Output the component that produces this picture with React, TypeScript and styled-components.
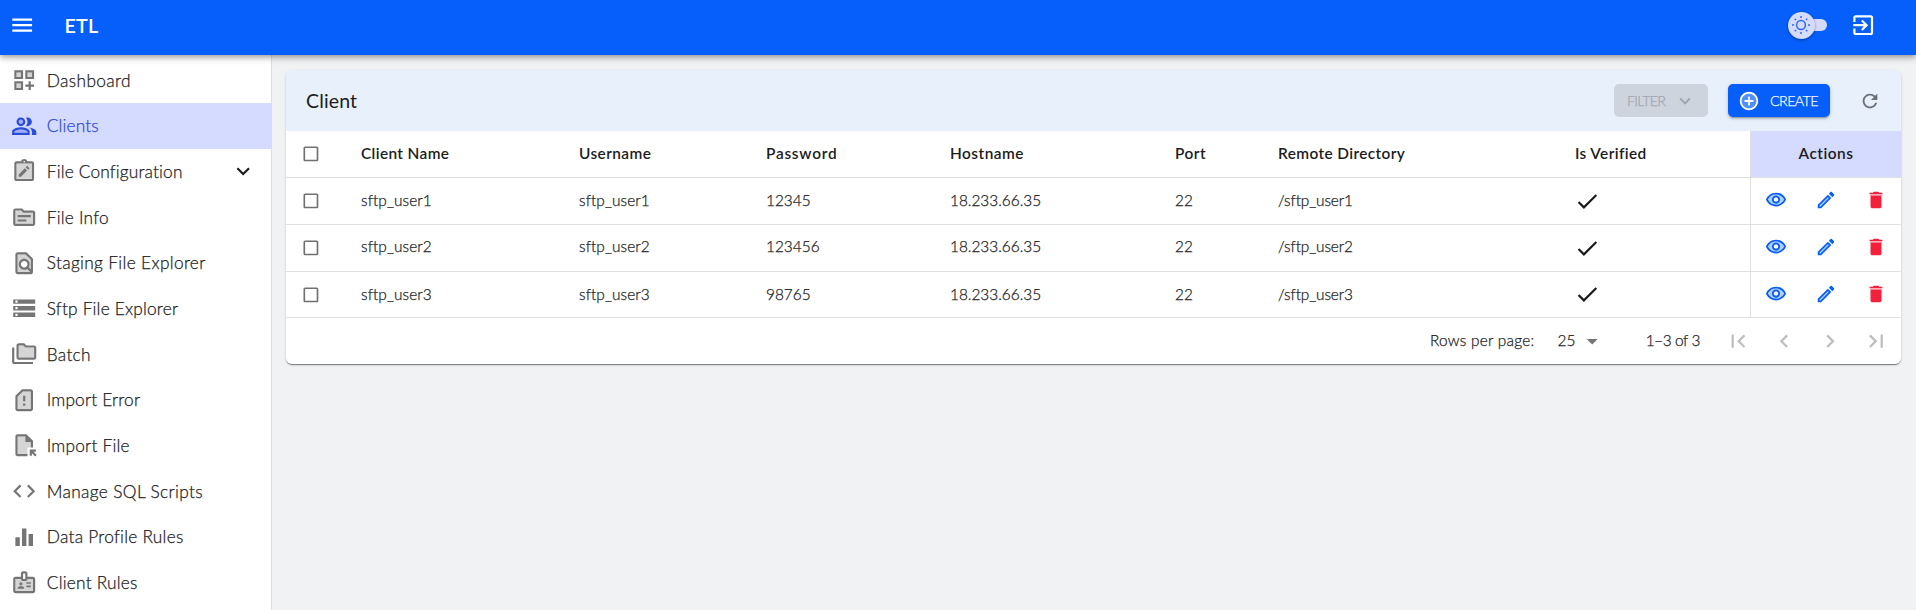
import React from "react";
import styled, { createGlobalStyle } from "styled-components";

const Global = createGlobalStyle`
  * { box-sizing: border-box; }
  body {
    margin: 0;
    background: #f1f2f4;
    color: #1c1c1c;
    font-family: Lato, "Liberation Sans", sans-serif;
  }
  button { font-family: inherit; margin: 0; }
  svg { display: block; flex: none; }
`;

/* ---------- icons ---------- */

type Shape = { d?: string; soft?: string };

const shapes: Record<string, Shape> = {
  menu: { d: "M3 18h18v-2H3zm0-5h18v-2H3zm0-7v2h18V6z" },
  exit: {
    d: "M10.09 15.59 11.5 17l5-5-5-5-1.41 1.41L12.67 11H3v2h9.67zM19 3H5c-1.1 0-2 .9-2 2v4h2V5h14v14H5v-4H3v4c0 1.1.9 2 2 2h14c1.1 0 2-.9 2-2V5c0-1.1-.9-2-2-2",
  },
  dashboard: {
    soft: "M5 5h4v4H5zM15 5h4v4h-4zM5 15h4v4H5z",
    d: "M3 11h8V3H3zm2-6h4v4H5zM13 3v8h8V3zm6 6h-4V5h4zM3 21h8v-8H3zm2-6h4v4H5zM18 13h-2v3h-3v2h3v3h2v-3h3v-2h-3z",
  },
  clients: {
    soft: "M9 6a2 2 0 1 0 0 4 2 2 0 0 0 0-4zM9 15c-2.7 0-5.8 1.29-6 2.01V18h12v-1c-.2-.71-3.3-2-6-2z",
    d: "M16.67 13.13C18.04 14.06 19 15.32 19 17v3h4v-3c0-2.18-3.57-3.47-6.33-3.87zM15 12c2.21 0 4-1.79 4-4s-1.79-4-4-4c-.47 0-.91.1-1.33.24C14.5 5.27 15 6.58 15 8s-.5 2.73-1.33 3.76c.42.14.86.24 1.33.24zM9 12c2.21 0 4-1.79 4-4s-1.79-4-4-4-4 1.79-4 4 1.79 4 4 4zm0-6c1.1 0 2 .9 2 2s-.9 2-2 2-2-.9-2-2 .9-2 2-2zm0 7c-2.67 0-8 1.34-8 4v3h16v-3c0-2.66-5.33-4-8-4zm6 5H3v-.99C3.2 16.29 6.3 15 9 15s5.8 1.29 6 2v1z",
  },
  config: {
    soft: "M5 5h14v14H5z",
    d: "M19 3h-4.18C14.4 1.84 13.3 1 12 1s-2.4.84-2.82 2H5c-1.1 0-2 .9-2 2v14c0 1.1.9 2 2 2h14c1.1 0 2-.9 2-2V5c0-1.1-.9-2-2-2zm-7-.25c.41 0 .75.34.75.75s-.34.75-.75.75-.75-.34-.75-.75.34-.75.75-.75zM19 19H5V5h14zM7 14.94V17h2.06l5.6-5.6-2.06-2.06zM16.85 9.21l-2.06-2.06-1.37 1.37 2.06 2.06z",
  },
  info: {
    soft: "M4 18V6h5.17l2 2H20v10z",
    d: "M20 6h-8l-2-2H4c-1.1 0-1.99.9-1.99 2L2 18c0 1.1.9 2 2 2h16c1.1 0 2-.9 2-2V8c0-1.1-.9-2-2-2zm0 12H4V6h5.17l2 2H20zM18 12H6v-2h12zM14 16H6v-2h8z",
  },
  staging: {
    soft: "M6 4v16h11.7l-3.1-3.1c-.8.4-1.7.9-2.6.9-2.6 0-4.9-2.1-4.9-4.8S9.3 8.1 12 8.1s4.9 2.2 4.9 4.9c0 .9-.4 1.8-.9 2.6l2 2V8.8L13.2 4z",
    d: "M18.84 21.8c.68-.32 1.16-1 1.16-1.8V8l-6-6H6c-1.1 0-2 .9-2 2v16c0 1.1.9 2 2 2h12c.3 0 .6-.07.84-.2zM6 4h7.17L18 8.83v8.75l-1.83-1.83c.52-.79.83-1.73.83-2.75 0-2.76-2.24-5-5-5s-5 2.24-5 5 2.24 5 5 5c1.02 0 1.96-.31 2.76-.83L17.6 20H6zm6 12c-1.66 0-3-1.34-3-3s1.34-3 3-3 3 1.34 3 3-1.34 3-3 3z",
  },
  storage: { d: "M2 20h20v-4H2zm2-3h2v2H4zM2 4v4h20V4zm4 3H4V5h2zm-4 7h20v-4H2zm2-3h2v2H4z" },
  batch: {
    soft: "M7 15V4h4.17l2 2H21v9z",
    d: "M3 6H1v13c0 1.1.9 2 2 2h17v-2H3zM21 4h-7l-2-2H7c-1.1 0-1.99.9-1.99 2L5 15c0 1.1.9 2 2 2h14c1.1 0 2-.9 2-2V6c0-1.1-.9-2-2-2zm0 11H7V4h4.17l2 2H21z",
  },
  alert: {
    soft: "M6 20V8.83L10.83 4H18v16z",
    d: "M18 2h-8L4.02 8 4 20c0 1.1.9 2 2 2h12c1.1 0 2-.9 2-2V4c0-1.1-.9-2-2-2zm0 18H6V8.83L10.83 4H18zM11 15h2v2h-2zM11 8h2v5h-2z",
  },
  importFile: {
    soft: "M6 4h7v5h5v5h-3v6H6z",
    d: "M15 22H6c-1.1 0-2-.9-2-2V4c0-1.1.9-2 2-2h8l6 6v6h-2V9h-5V4H6v16h9zm4-.34v-2.24l2.95 2.95 1.41-1.41L20.41 18h2.24v-2H17v5.66z",
  },
  code: { d: "M9.4 16.6 4.8 12l4.6-4.6L8 6l-6 6 6 6zm5.2 0 4.6-4.6-4.6-4.6L16 6l6 6-6 6z" },
  bars: { d: "M10 20h4V4h-4zm-6 0h4v-8H4zM16 9v11h4V9z" },
  badge: {
    soft: "M4 20V9h5c0 1.1.9 2 2 2h2c1.1 0 2-.9 2-2h5v11z",
    d: "M20 7h-5V4c0-1.1-.9-2-2-2h-2c-1.1 0-2 .9-2 2v3H4c-1.1 0-2 .9-2 2v11c0 1.1.9 2 2 2h16c1.1 0 2-.9 2-2V9c0-1.1-.9-2-2-2zm-9-3h2v5h-2zm9 16H4V9h5c0 1.1.9 2 2 2h2c1.1 0 2-.9 2-2h5zM9 12a1.5 1.5 0 1 0 0 3 1.5 1.5 0 0 0 0-3zM11.08 16.18C10.44 15.9 9.74 15.75 9 15.75s-1.44.15-2.08.43C6.36 16.42 6 16.96 6 17.57V18h6v-.43c0-.61-.36-1.15-.92-1.39zM14 12h4v1.5h-4zM14 15h4v1.5h-4z",
  },
  chevronDown: { d: "M7.41 8.59 12 13.17l4.59-4.58L18 10l-6 6-6-6z" },
  add: {
    soft: "M12 4c-4.41 0-8 3.59-8 8s3.59 8 8 8 8-3.59 8-8-3.59-8-8-8zm5 9h-4v4h-2v-4H7v-2h4V7h2v4h4z",
    d: "M13 7h-2v4H7v2h4v4h2v-4h4v-2h-4zm-1-5C6.48 2 2 6.48 2 12s4.48 10 10 10 10-4.48 10-10S17.52 2 12 2zm0 18c-4.41 0-8-3.59-8-8s3.59-8 8-8 8 3.59 8 8-3.59 8-8 8z",
  },
  refresh: {
    d: "M17.65 6.35C16.2 4.9 14.21 4 12 4c-4.42 0-7.99 3.58-7.99 8s3.57 8 7.99 8c3.73 0 6.84-2.55 7.73-6h-2.08c-.82 2.33-3.04 4-5.65 4-3.31 0-6-2.69-6-6s2.69-6 6-6c1.66 0 3.14.69 4.22 1.78L13 11h7V4z",
  },
  checkbox: { d: "M19 5v14H5V5zm0-2H5c-1.1 0-2 .9-2 2v14c0 1.1.9 2 2 2h14c1.1 0 2-.9 2-2V5c0-1.1-.9-2-2-2z" },
  done: { d: "M9 16.2 4.8 12l-1.4 1.4L9 19 21 7l-1.4-1.4z" },
  view: {
    soft: "M12 6c-3.79 0-7.17 2.13-8.82 5.5C4.83 14.87 8.21 17 12 17s7.17-2.13 8.82-5.5C19.17 8.13 15.79 6 12 6zm0 3a2.5 2.5 0 1 1 0 5 2.5 2.5 0 0 1 0-5z",
    d: "M12 4C7 4 2.73 7.11 1 11.5 2.73 15.89 7 19 12 19s9.27-3.11 11-7.5C21.27 7.11 17 4 12 4zm0 13c-3.79 0-7.17-2.13-8.82-5.5C4.83 8.13 8.21 6 12 6s7.17 2.13 8.82 5.5C19.17 14.87 15.79 17 12 17zm0-10c-2.48 0-4.5 2.02-4.5 4.5S9.52 16 12 16s4.5-2.02 4.5-4.5S14.48 7 12 7zm0 7c-1.38 0-2.5-1.12-2.5-2.5S10.62 9 12 9s2.5 1.12 2.5 2.5S13.38 14 12 14z",
  },
  edit: {
    soft: "M5 18.08V19h.92l9.06-9.06-.92-.92z",
    d: "M20.71 7.04c.39-.39.39-1.02 0-1.41l-2.34-2.34c-.2-.2-.45-.29-.71-.29s-.51.1-.7.29l-1.83 1.83 3.75 3.75zM3 17.25V21h3.75L17.81 9.94l-3.75-3.75zM5.92 19H5v-.92l9.06-9.06.92.92z",
  },
  trash: {
    soft: "M5 6h14v1H5z",
    d: "M6 19c0 1.1.9 2 2 2h8c1.1 0 2-.9 2-2V7H6zM19 4h-3.5l-1-1h-5l-1 1H5v1.6h14z",
  },
  dropdown: { d: "m7 10 5 5 5-5z" },
  first: { d: "M18.41 16.59 13.82 12l4.59-4.59L17 6l-6 6 6 6zM6 6h2v12H6z" },
  prev: { d: "M15.41 7.41 14 6l-6 6 6 6 1.41-1.41L10.83 12z" },
  next: { d: "M10 6 8.59 7.41 13.17 12l-4.58 4.59L10 18l6-6z" },
  last: { d: "M5.59 7.41 10.18 12l-4.59 4.59L7 18l6-6-6-6zM16 6h2v12h-2z" },
};

const Icon = ({ name, size = 26.4 }: { name: string; size?: number }) => (
  <svg width={size} height={size} viewBox="0 0 24 24" fill="currentColor" fillRule="evenodd">
    {shapes[name].soft && <path d={shapes[name].soft} opacity={0.3} />}
    <path d={shapes[name].d} />
  </svg>
);

const Sun = () => (
  <svg width="20" height="20" viewBox="0 0 20 20" fill="none" stroke="#2f6bf2" strokeWidth="1.5">
    <circle cx="10" cy="10" r="4.4" />
    <path d="M10 1v2M10 17v2M1 10h2M17 10h2M3.7 3.7l1.3 1.3M15 15l1.3 1.3M3.7 16.3l1.3-1.3M15 5l1.3-1.3" />
  </svg>
);

/* ---------- text ---------- */

const Text = styled.span<{ $track?: number }>`
  letter-spacing: ${(p) => p.$track ?? 0}px;
  white-space: nowrap;
`;

/* Light text with a hairline outline, between the light and regular weights. */
const BodyText = styled(Text)`
  font-weight: 300;
  -webkit-text-stroke: 0.25px currentColor;
`;

/* ---------- shell ---------- */

const Page = styled.div`
  height: 610px;
  display: flex;
  flex-direction: column;
  overflow: hidden;
`;

const AppBar = styled.header`
  position: relative;
  z-index: 2;
  flex: none;
  height: 55px;
  padding: 0 40px 5px 8.6px;
  display: flex;
  align-items: center;
  background: #065ffb;
  color: #fff;
  box-shadow: 0 2px 4px -1px rgba(0, 0, 0, 0.2), 0 4px 5px rgba(0, 0, 0, 0.14),
    0 1px 10px rgba(0, 0, 0, 0.12);
`;

const Brand = styled.h1`
  flex: 1;
  margin: 0 0 0 29.4px;
  font-size: 19.8px;
  line-height: 28px;
  font-weight: 600;
`;

const Toggle = styled.div`
  display: flex;
  align-items: center;
  margin-right: 23px;
`;

const Thumb = styled.div`
  z-index: 1;
  width: 27px;
  height: 27px;
  border-radius: 50%;
  display: grid;
  place-items: center;
  background: #d5daff;
  box-shadow: 0 1px 3px rgba(0, 0, 0, 0.4);
`;

const Track = styled.div`
  width: 24px;
  height: 12px;
  margin-left: -12px;
  border-radius: 6px;
  background: #d5daff;
`;

const Body = styled.div`
  flex: 1;
  min-height: 0;
  display: flex;
`;

const Sidebar = styled.nav`
  flex: none;
  width: 272px;
  padding-top: 2.5px;
  background: #fff;
  border-right: 1px solid #dddee1;
`;

const NavItem = styled.a<{ $active?: boolean }>`
  display: flex;
  align-items: center;
  height: 45.67px;
  padding: 0 15px 0 10.8px;
  gap: 9.6px;
  font-size: 17.3px;
  color: ${(p) => (p.$active ? "#2b4bdb" : "#1c1c1c")};
  background: ${(p) => (p.$active ? "#d5daff" : "transparent")};
`;

const NavIcon = styled.span<{ $active?: boolean }>`
  color: ${(p) => (p.$active ? "#2b4bdb" : "#757575")};
`;

const NavLabel = styled(BodyText)`
  flex: 1;
`;

const Main = styled.main`
  flex: 1;
  min-width: 0;
  padding: 15px 15px 0 14px;
`;

/* ---------- card ---------- */

const Card = styled.section`
  border-radius: 6px;
  overflow: hidden;
  background: #fff;
  box-shadow: 0 2px 1px -1px rgba(0, 0, 0, 0.3), 0 1px 1px rgba(0, 0, 0, 0.2),
    0 1px 3px rgba(0, 0, 0, 0.14);
`;

const Toolbar = styled.div`
  height: 61px;
  padding: 0 20px;
  display: flex;
  align-items: center;
  background: #e8f0fc;
`;

const Title = styled.h2`
  flex: 1;
  margin: 0;
  font-size: 19.5px;
  font-weight: 400;
`;

const Button = styled.button<{ $primary?: boolean }>`
  display: flex;
  align-items: center;
  justify-content: space-between;
  width: ${(p) => (p.$primary ? 102 : 94)}px;
  height: 33px;
  margin-right: ${(p) => (p.$primary ? 29 : 20)}px;
  padding: 0 12px 0 ${(p) => (p.$primary ? 10 : 13)}px;
  border: 0;
  border-radius: 5px;
  font-size: 14.3px;
  color: ${(p) => (p.$primary ? "#fff" : "#a0a6ae")};
  background: ${(p) => (p.$primary ? "#065ffb" : "#cdd4de")};
  box-shadow: ${(p) =>
    p.$primary
      ? "0 3px 1px -2px rgba(0,0,0,.2), 0 2px 2px rgba(0,0,0,.14), 0 1px 5px rgba(0,0,0,.12)"
      : "none"};
`;

const IconButton = styled.button<{ $tone?: string; $w?: number }>`
  display: grid;
  place-items: center;
  width: ${(p) => (p.$w ? p.$w + "px" : "auto")};
  padding: 0;
  border: 0;
  background: none;
  color: ${(p) => p.$tone ?? "inherit"};
`;

const Row = styled.div<{ $h?: number }>`
  display: grid;
  grid-template-columns: 75px 218px 187px 184px 225px 103px 297px 175px 151px;
  height: ${(p) => p.$h ?? 47}px;
  border-bottom: 1px solid #e0e0e0;
`;

const Cell = styled.div<{ $head?: boolean; $lift?: number }>`
  display: flex;
  align-items: center;
  padding-bottom: ${(p) => p.$lift ?? 2}px;
  font-size: 15.4px;
  font-weight: ${(p) => (p.$head ? 600 : 300)};
`;

const VerifiedCell = styled.div`
  display: flex;
  align-items: center;
  margin-left: -1px;
`;

const CheckCell = styled.div`
  display: flex;
  align-items: center;
  padding-left: 15.2px;
  color: #707070;
`;

const ActionCell = styled.div<{ $head?: boolean }>`
  display: flex;
  align-items: center;
  justify-content: center;
  padding-bottom: 2px;
  border-left: 1px solid #e0e0e0;
  font-size: 15.4px;
  font-weight: 600;
  background: ${(p) => (p.$head ? "#d5daff" : "#fff")};
`;

const Footer = styled.div`
  height: 46px;
  padding-right: 2px;
  display: flex;
  align-items: center;
  justify-content: flex-end;
  font-size: 15.4px;
  > span, div > span { padding-bottom: 1.5px; }
`;

const PageSize = styled.div`
  display: flex;
  align-items: center;
  margin: 0 40px 0 23px;
  gap: 4px;
  svg { color: #757575; }
`;

const Pager = styled.div`
  display: flex;
  margin-left: 15px;
`;

/* ---------- data ---------- */

const nav = [
  { icon: "dashboard", label: "Dashboard", track: 0.38 },
  { icon: "clients", label: "Clients", track: 0.15, active: true },
  { icon: "config", label: "File Configuration", track: 0.17, open: true },
  { icon: "info", label: "File Info", track: 0.22 },
  { icon: "staging", label: "Staging File Explorer", track: 0.34 },
  { icon: "storage", label: "Sftp File Explorer", track: 0.2 },
  { icon: "batch", label: "Batch", track: 0.3 },
  { icon: "alert", label: "Import Error", track: 0.17 },
  { icon: "importFile", label: "Import File", track: 0.22 },
  { icon: "code", label: "Manage SQL Scripts", track: 0.35 },
  { icon: "bars", label: "Data Profile Rules", track: 0.26 },
  { icon: "badge", label: "Client Rules", track: 0.22 },
];

const columns = [
  { label: "Client Name", track: 0.38 },
  { label: "Username", track: 0.42 },
  { label: "Password", track: 0.75 },
  { label: "Hostname", track: 0.5 },
  { label: "Port", track: 0.5 },
  { label: "Remote Directory", track: 0.4 },
  { label: "Is Verified", track: 0.38 },
];

const clients = [
  { user: "sftp_user1", password: "12345", h: 47, lift: 2 },
  { user: "sftp_user2", password: "123456", h: 47, lift: 4 },
  { user: "sftp_user3", password: "98765", h: 46, lift: 2 },
];

export default function App() {
  return (
    <Page>
      <Global />
      <AppBar>
        <IconButton><Icon name="menu" /></IconButton>
        <Brand><Text $track={0.2}>ETL</Text></Brand>
        <Toggle>
          <Thumb><Sun /></Thumb>
          <Track />
        </Toggle>
        <IconButton><Icon name="exit" /></IconButton>
      </AppBar>
      <Body>
        <Sidebar>
          {nav.map((n) => (
            <NavItem key={n.label} $active={n.active}>
              <NavIcon $active={n.active}><Icon name={n.icon} /></NavIcon>
              <NavLabel $track={n.track}>{n.label}</NavLabel>
              {n.open && <Icon name="chevronDown" />}
            </NavItem>
          ))}
        </Sidebar>
        <Main>
          <Card>
            <Toolbar>
              <Title><Text $track={0.15}>Client</Text></Title>
              <Button disabled>
                <BodyText $track={-0.8}>FILTER</BodyText>
                <Icon name="chevronDown" size={22} />
              </Button>
              <Button $primary>
                <Icon name="add" size={22} />
                <BodyText $track={-0.6}>CREATE</BodyText>
              </Button>
              <IconButton $tone="#6b6f76"><Icon name="refresh" size={22} /></IconButton>
            </Toolbar>
            <Row>
              <CheckCell><Icon name="checkbox" size={19.8} /></CheckCell>
              {columns.map((c) => (
                <Cell key={c.label} $head><Text $track={c.track}>{c.label}</Text></Cell>
              ))}
              <ActionCell $head><Text $track={0.5}>Actions</Text></ActionCell>
            </Row>
            {clients.map((c) => (
              <Row key={c.user} $h={c.h}>
                <CheckCell><Icon name="checkbox" size={19.8} /></CheckCell>
                <Cell $lift={c.lift}><BodyText $track={0.1}>{c.user}</BodyText></Cell>
                <Cell $lift={c.lift}><BodyText $track={0.1}>{c.user}</BodyText></Cell>
                <Cell $lift={c.lift}><BodyText>{c.password}</BodyText></Cell>
                <Cell $lift={c.lift}><BodyText>18.233.66.35</BodyText></Cell>
                <Cell $lift={c.lift}><BodyText>22</BodyText></Cell>
                <Cell $lift={c.lift}><BodyText $track={-0.1}>/{c.user}</BodyText></Cell>
                <VerifiedCell><Icon name="done" /></VerifiedCell>
                <ActionCell>
                  <IconButton $w={50} $tone="#065ffb"><Icon name="view" size={22} /></IconButton>
                  <IconButton $w={50} $tone="#065ffb"><Icon name="edit" size={22} /></IconButton>
                  <IconButton $w={50} $tone="#f3203c"><Icon name="trash" size={22} /></IconButton>
                </ActionCell>
              </Row>
            ))}
            <Footer>
              <BodyText $track={0.25}>Rows per page:</BodyText>
              <PageSize>
                <BodyText>25</BodyText>
                <Icon name="dropdown" />
              </PageSize>
              <BodyText $track={-0.4}>1–3 of 3</BodyText>
              <Pager>
                {["first", "prev", "next", "last"].map((n) => (
                  <IconButton key={n} $w={46} $tone="#bdbdbd"><Icon name={n} /></IconButton>
                ))}
              </Pager>
            </Footer>
          </Card>
        </Main>
      </Body>
    </Page>
  );
}
